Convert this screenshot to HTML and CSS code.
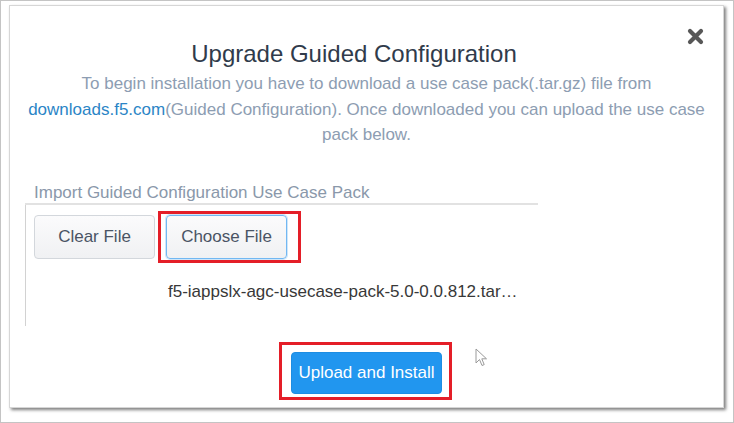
FILE: index.html
```html
<!DOCTYPE html>
<html>
<head>
<meta charset="utf-8">
<link rel="stylesheet" href="styles.css">
</head>
<body>
<div class="frame">
  <div class="dialog">
    <div class="header">
      <h1 class="title">Upgrade Guided Configuration</h1>
      <span class="close" aria-label="close">
        <svg width="17" height="17" viewBox="0 0 17 17"><path d="M3 3 L14 14 M14 3 L3 14" stroke="#575757" stroke-width="4.2" stroke-linecap="round"/></svg>
      </span>
    </div>
    <p class="intro">To begin installation you have to download a use case pack(.tar.gz) file from <a class="link">downloads.f5.com</a>(Guided Configuration). Once downloaded you can upload the use case pack below.</p>
    <section class="import">
      <div class="import-title">Import Guided Configuration Use Case Pack</div>
      <div class="import-body">
        <div class="btn-row">
          <button class="btn">Clear File</button>
          <span class="mark-wrap">
            <button class="btn btn-focus">Choose File</button>
            <span class="mark mark-choose"></span>
          </span>
        </div>
        <div class="filename">f5-iappslx-agc-usecase-pack-5.0-0.0.812.tar…</div>
      </div>
    </section>
    <div class="footer">
      <span class="mark-wrap">
        <button class="btn-primary">Upload and Install</button>
        <span class="mark mark-upload"></span>
      </span>
      <svg class="cursor" width="14" height="20" viewBox="0 0 14 20"><path d="M1 1 L1 15 L4.5 11.5 L7 17.5 L9.2 16.6 L6.8 10.8 L11.5 10.8 Z" fill="#fff" stroke="#9a9a9a" stroke-width="1" stroke-linejoin="round"/></svg>
    </div>
  </div>
</div>
</body>
</html>
```

FILE: styles.css
```css
* { box-sizing: border-box; }
html, body { margin: 0; padding: 0; background: #fff; }
body { font-family: "Liberation Sans", Arial, sans-serif; }

.frame {
  width: 734px;
  height: 423px;
  border: 1px solid #c4c4c4;
  padding: 4px 0 0 8px;
  background: #fff;
}

.dialog {
  position: relative;
  width: 715px;
  height: 403px;
  background: #fff;
  border: 1px solid #d6d6d6;
  box-shadow: 2px 2px 3px rgba(0,0,0,0.5);
  padding: 22px 11px 0 11px;
}

.header {
  display: flex;
  align-items: flex-start;
  padding-right: 8px;
}
.title {
  flex: 1;
  margin: 13px 0 0 0;
  font-size: 24px;
  line-height: 26px;
  font-weight: normal;
  color: #303b4b;
  text-align: center;
}
.close {
  width: 17px;
  height: 17px;
  display: block;
}
.close svg { display: block; }

.intro {
  margin: 4px 0 0 0;
  font-size: 17px;
  line-height: 25.5px;
  color: #8d9db2;
  text-align: center;
}
.link { color: #2b85c6; text-decoration: none; }

.import {
  margin: 35px 0 0 4px;
  width: 513px;
}
.import-title {
  padding-left: 9px;
  font-size: 17px;
  line-height: 20px;
  color: #8a98aa;
  border-bottom: 2px solid #e2e2e2;
}
.import-body {
  border-left: 1px solid #d2d2d2;
  padding: 10px 0 24px 8px;
}
.btn-row {
  display: flex;
  gap: 11px;
}
.btn {
  width: 121px;
  height: 44px;
  font-family: inherit;
  font-size: 17px;
  color: #4a5464;
  background: linear-gradient(#fbfbfc, #f0f1f3);
  border: 1px solid #d3d7dc;
  border-radius: 4px;
  padding: 0;
}
.btn-focus {
  border-color: #72b8f2;
  box-shadow: 0 0 0 1px rgba(114,184,242,0.35);
}
.mark-wrap {
  position: relative;
  display: inline-block;
}
.mark {
  position: absolute;
  border: 3px solid #e41e28;
}
.mark-choose { left: -8px; right: -14px; top: -4px; bottom: -4px; }
.mark-upload { left: -12px; right: -10px; top: -10px; bottom: -6px; }

.filename {
  margin-top: 23px;
  padding-left: 134px;
  font-size: 17px;
  line-height: 20px;
  color: #383838;
}

.footer {
  position: relative;
  margin-top: 26px;
  display: flex;
  justify-content: center;
}
.btn-primary {
  width: 151px;
  height: 42px;
  font-family: inherit;
  font-size: 17px;
  color: #fff;
  background: #2196ef;
  border: 1px solid #1d8de2;
  border-radius: 4px;
  padding: 0;
  display: block;
}
.cursor {
  position: absolute;
  left: 454px;
  top: -4px;
}
```
